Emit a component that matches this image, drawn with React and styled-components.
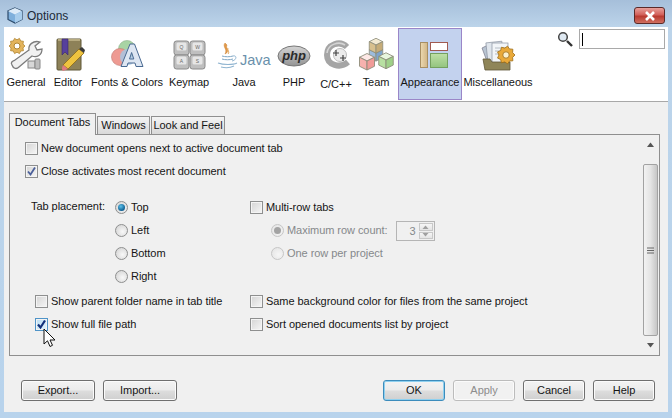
import React from "react";
import styled, { createGlobalStyle } from "styled-components";

const GlobalStyle = createGlobalStyle`
  html, body {
    margin: 0;
    padding: 0;
    overflow: hidden;
  }
  * {
    box-sizing: border-box;
  }
`;

const Window = styled.div`
  position: relative;
  width: 672px;
  height: 418px;
  display: flex;
  flex-direction: column;
  padding: 0 4px 6px;
  background: linear-gradient(to bottom, #a6bfda 0, #bcd4ea 27px, #b8d3ec 100%);
  font-family: "Liberation Sans", "Noto Sans", sans-serif;
  font-size: 11px;
  letter-spacing: -0.05px;
  color: #151515;
`;

const TitleBar = styled.div`
  height: 27px;
  flex: none;
  display: flex;
  align-items: center;
  padding: 4px 3px 0 3px;
  gap: 4px;
  font-size: 12px;
  letter-spacing: 0;
  color: #1c2a38;
`;

const CloseButton = styled.div`
  margin-left: auto;
  width: 31px;
  height: 17px;
  border: 1px solid #5a2a28;
  border-radius: 3px;
  background: linear-gradient(to bottom, #e8a09a 0%, #d2605a 45%, #b93a30 55%, #cf6f60 100%);
  display: flex;
  align-items: center;
  justify-content: center;
`;

const Body = styled.div`
  flex: 1;
  display: flex;
  flex-direction: column;
  background: #f0f0f0;
`;

const Toolbar = styled.div`
  height: 75px;
  flex: none;
  display: flex;
  align-items: flex-start;
  background: #fff;
  border-bottom: 1px solid #a8a8a8;
`;

const ToolItem = styled.div`
  width: ${(p) => p.$w}px;
  margin-top: 1px;
  margin-left: ${(p) => p.$ml || 0}px;
  height: 72px;
  flex: none;
  display: flex;
  flex-direction: column;
  align-items: center;
  padding-top: 7px;
  border: 1px solid ${(p) => (p.$active ? "#9a86c8" : "transparent")};
  background: ${(p) => (p.$active ? "#c3d2ee" : "transparent")};
`;

const ToolIcon = styled.div`
  height: 36px;
  display: flex;
  justify-content: center;
`;

const ToolLabel = styled.div`
  margin-top: ${(p) => (p.$low ? 4 : 2)}px;
  height: 16px;
  line-height: 16px;
  white-space: nowrap;
`;

const SearchBox = styled.div`
  margin-left: auto;
  margin-right: 3px;
  margin-top: 2px;
  display: flex;
  align-items: flex-start;
  gap: 6px;
`;

const SearchGlyph = styled.svg`
  margin-top: 2px;
`;

const SearchInput = styled.div`
  width: 86px;
  height: 20px;
  background: #fff;
  border: 1px solid #a9a9a9;
  padding: 3px 2px;
`;

const Caret = styled.div`
  width: 1px;
  height: 13px;
  background: #000;
`;

const TabArea = styled.div`
  flex: 1;
  display: flex;
  flex-direction: column;
  padding: 11px 8px 0 5px;
`;

const TabRow = styled.div`
  display: flex;
  align-items: flex-end;
  height: 22px;
  gap: 1px;
  position: relative;
  z-index: 1;
  margin-bottom: -1px;
`;

const Tab = styled.div`
  width: ${(p) => p.$w}px;
  height: ${(p) => (p.$active ? 22 : 19)}px;
  text-align: center;
  white-space: nowrap;
  line-height: ${(p) => (p.$active ? 17 : 16)}px;
  border: 1px solid #8f8f8f;
  border-bottom: ${(p) => (p.$active ? "none" : "1px solid #8f8f8f")};
  background: ${(p) =>
    p.$active ? "#f0f0f0" : "linear-gradient(to bottom, #f4f4f4, #d9d9d9)"};
`;

const Panel = styled.div`
  height: 222px;
  flex: none;
  display: flex;
  border: 1px solid #8f8f8f;
  background: #f0f0f0;
`;

const PanelMain = styled.div`
  flex: 1;
  padding: 1px 0 0 15px;
  display: flex;
  flex-direction: column;
`;

const Row = styled.div`
  height: 23px;
  display: flex;
  align-items: center;
  padding-left: ${(p) => p.$indent || 0}px;
  white-space: nowrap;
  color: ${(p) => (p.$disabled ? "#85888b" : "inherit")};
`;

const Section = styled.div`
  display: flex;
  margin-top: ${(p) => p.$top || 0}px;
`;

const LeftColumn = styled.div`
  width: 225px;
  flex: none;
  display: flex;
  padding-left: 6px;
`;

const PlacementLabel = styled.div`
  width: 84px;
  height: 23px;
  line-height: 23px;
  flex: none;
`;

const Column = styled.div`
  display: flex;
  flex-direction: column;
`;

const CheckBox = styled.span`
  width: 13px;
  height: 13px;
  flex: none;
  margin: 2px 3px 0 0;
  border: 1px solid ${(p) => (p.$hover ? "#4f94c8" : "#8e8f8f")};
  box-shadow: inset 0 0 0 1px #f4f4f4;
  background: ${(p) =>
    p.$hover
      ? "linear-gradient(135deg, #bcdff5, #e4f3fb)"
      : "linear-gradient(135deg, #d4d4d4, #f6f6f6)"};
  display: flex;
  align-items: center;
  justify-content: center;
`;

const Radio = styled.span`
  width: 13px;
  height: 13px;
  flex: none;
  margin: 2px 3px 0 0;
  border-radius: 50%;
  border: 1px solid ${(p) => (p.$disabled ? "#c6c6c6" : "#8e8f8f")};
  background: ${(p) =>
    p.$disabled
      ? "radial-gradient(circle at 60% 60%, #f6f6f6, #e2e2e2)"
      : "radial-gradient(circle at 60% 60%, #f8f8f8, #cfcfcf)"};
  display: flex;
  align-items: center;
  justify-content: center;
`;

const RadioDot = styled.span`
  width: 7px;
  height: 7px;
  border-radius: 50%;
  background: ${(p) =>
    p.$disabled
      ? "#a3a3a3"
      : "radial-gradient(circle at 40% 35%, #5cc0ea, #0f5f92 70%)"};
`;

const Spinner = styled.div`
  width: 39px;
  height: 20px;
  margin-left: 8px;
  margin-top: 3px;
  display: flex;
  border: 1px solid #b5b5b5;
  background: #f0f0f0;
`;

const SpinnerValue = styled.div`
  flex: 1;
  text-align: right;
  padding-right: 2px;
  line-height: 18px;
  color: #85888b;
`;

const SpinnerArrows = styled.div`
  width: 16px;
  display: flex;
  flex-direction: column;
  padding: 1px;
  gap: 1px;
`;

const SpinnerArrow = styled.div`
  flex: 1;
  border: 1px solid #c8c8c8;
  background: linear-gradient(to bottom, #f6f6f6, #e4e4e4);
  display: flex;
  align-items: center;
  justify-content: center;
`;

const Scrollbar = styled.div`
  width: 15px;
  margin-right: 1px;
  flex: none;
  display: flex;
  flex-direction: column;
  align-items: center;
`;

const ScrollEnd = styled.div`
  height: 19px;
  flex: none;
  display: flex;
  align-items: center;
  justify-content: center;
`;

const ScrollThumb = styled.div`
  flex: 1;
  width: 15px;
  margin-top: 10px;
  border: 1px solid #a2a2a2;
  border-radius: 2px;
  background: linear-gradient(to right, #f2f2f2, #e4e4e4 50%, #c6c6c6);
  display: flex;
  align-items: center;
  justify-content: center;
`;

const Footer = styled.div`
  flex: 1;
  display: flex;
  align-items: flex-start;
  gap: 8px;
  padding: 24px 13px 0 17px;
`;

const FooterSpacer = styled.div`
  flex: 1;
`;

const Button = styled.div`
  width: ${(p) => p.$w}px;
  height: 21px;
  line-height: 19px;
  text-align: center;
  border-radius: 3px;
  border: 1px solid ${(p) => (p.$primary ? "#3c8cbc" : p.$disabled ? "#bcbcbc" : "#6f6f6f")};
  color: ${(p) => (p.$disabled ? "#8d8d8d" : "#151515")};
  background: ${(p) =>
    p.$disabled
      ? "#f1f1f1"
      : "linear-gradient(to bottom, #f3f3f3 0%, #ececec 45%, #dcdcdc 55%, #cfcfcf 100%)"};
  box-shadow: ${(p) => (p.$primary ? "inset 0 0 0 1px #8fd0ef" : "inset 0 0 0 1px #fbfbfb")};
`;

const Cursor = styled.svg`
  position: absolute;
  left: 43px;
  top: 328px;
`;

const Check = ({ dark }) => (
  <svg width="11" height="11" viewBox="0 0 11 11">
    <path
      d="M2 5.5 L4.5 8.5 L9 1.5"
      fill="none"
      stroke={dark ? "#12307a" : "#4a5f9a"}
      strokeWidth={dark ? 2.2 : 1.8}
    />
  </svg>
);

const Cube = ({ x, y, s, top, left, right }) => (
  <g transform={`translate(${x} ${y}) scale(${s})`} stroke="#8d8d7a" strokeWidth="0.6">
    <path d="M0 -5 L5 -2.5 L0 0 L-5 -2.5 Z" fill={top} />
    <path d="M-5 -2.5 L0 0 L0 6 L-5 3.5 Z" fill={left} />
    <path d="M5 -2.5 L0 0 L0 6 L5 3.5 Z" fill={right} />
  </g>
);

const gearPath = (cx, cy, r, teeth) => {
  let d = "";
  for (let i = 0; i < teeth * 2; i++) {
    const a = (Math.PI * i) / teeth;
    const rad = i % 2 === 0 ? r : r * 0.78;
    d += `${i === 0 ? "M" : "L"}${(cx + rad * Math.cos(a)).toFixed(2)} ${(cy + rad * Math.sin(a)).toFixed(2)} `;
  }
  return d + "Z";
};

const GeneralIcon = () => (
  <svg width="36" height="36" viewBox="0 0 36 36">
    <path d={gearPath(9, 10, 8, 10)} fill="#e3b45c" stroke="#b08532" strokeWidth="0.8" />
    <circle cx="9" cy="10" r="3" fill="#fff" stroke="#b08532" />
    <path
      d="M4 29 C2 26 5 25 7 24 L21 14 C20 9 25 4 32 6 L27 10 L29 14 L34 13 C34 19 29 22 24 20 L11 31 C8 34 5 32 4 29 Z"
      fill="#f1f1f1"
      stroke="#7d7d7d"
      strokeWidth="1.3"
    />
    <rect x="20" y="25" width="7" height="7" fill="#d7d7d7" stroke="#888" />
    <rect x="27" y="23" width="5" height="10" rx="1" fill="#bdbdbd" stroke="#888" />
  </svg>
);

const EditorIcon = () => (
  <svg width="36" height="36" viewBox="0 0 36 36">
    <rect x="7" y="3" width="24" height="31" rx="1" fill="#8d8158" stroke="#5f5737" />
    <rect x="8" y="3" width="22" height="2" fill="#b7ab80" />
    <path d="M12 3 H18 V19 L15 16 L12 19 Z" fill="#57409c" stroke="#35256e" strokeWidth="0.6" />
    <path d="M13 29 L29 13 L34 17 L18 33 Z" fill="#eec33f" stroke="#8a6a18" strokeWidth="0.8" />
    <path d="M29 13 L32 11 L35 14 L34 17 Z" fill="#3a3a3a" />
    <path d="M13 29 L18 33 L13 35 Q11 33 13 29 Z" fill="#e07a80" />
  </svg>
);

const FontsIcon = () => (
  <svg width="36" height="36" viewBox="0 0 36 36">
    <circle cx="18" cy="13" r="8.5" fill="#a8d4a4" stroke="#8fb08c" strokeWidth="0.6" />
    <circle cx="11" cy="21" r="8.5" fill="#ee9a92" stroke="#bf7a74" strokeWidth="0.6" />
    <circle cx="19" cy="21" r="8" fill="#a8c6e2" opacity="0.85" />
    <path
      d="M12 30.5 H18 L19 27 H26 L27 30.5 H34 L25.5 8 H21 Z M20.5 23 L22.6 16.5 L24.8 23 Z"
      fill="#dde6f2"
      stroke="#4a6a92"
      strokeWidth="1"
      fillRule="evenodd"
    />
  </svg>
);

const KeyCap = ({ x, y, label }) => (
  <g>
    <rect x={x} y={y} width="15" height="14" rx="2.5" fill="#bfbfbf" stroke="#8a8a8a" />
    <rect x={x + 2.5} y={y + 1.5} width="10" height="8" rx="1.5" fill="#e6e6e6" />
    <text x={x + 7.5} y={y + 8} fontSize="5" textAnchor="middle" fill="#666" fontFamily="Liberation Sans, sans-serif">
      {label}
    </text>
  </g>
);

const KeymapIcon = () => (
  <svg width="36" height="36" viewBox="0 0 36 36">
    <KeyCap x={3} y={5} label="Q" />
    <KeyCap x={19} y={5} label="W" />
    <KeyCap x={3} y={19} label="A" />
    <KeyCap x={19} y={19} label="S" />
  </svg>
);

const JavaIcon = () => (
  <svg width="58" height="36" viewBox="0 0 58 36">
    <path d="M10 7 C7 11 13 13 10 18 C16 15 10 12 12 9 Z" fill="#e09a4a" stroke="#d08030" strokeWidth="0.5" />
    <path d="M13 12 C12 14 15 16 13 18" fill="none" stroke="#e0a050" />
    <path d="M7 20 C10 21 15 21 18 20 M7 23 C10 24 15 24 18 23" stroke="#7fa6c4" strokeWidth="1" fill="none" />
    <path d="M3 27 C8 29 18 29 22 27 M6 31 C10 32 15 32 19 30" stroke="#8fb4d0" strokeWidth="1.1" fill="none" />
    <path d="M18 20 C22 19 22 24 17 25" stroke="#8fb4d0" fill="none" />
    <text x="25" y="29" fontSize="14.5" fill="#6a90ab" fontFamily="Liberation Sans, sans-serif">
      Java
    </text>
  </svg>
);

const PhpIcon = () => (
  <svg width="36" height="36" viewBox="0 0 36 36">
    <defs>
      <linearGradient id="phpFill" x1="0" y1="0" x2="0" y2="1">
        <stop offset="0" stopColor="#d4d4d4" />
        <stop offset="1" stopColor="#949494" />
      </linearGradient>
    </defs>
    <ellipse cx="18" cy="20" rx="16" ry="10" fill="url(#phpFill)" stroke="#777" />
    <text x="18" y="24" fontSize="13" fontWeight="700" fontStyle="italic" textAnchor="middle" fill="#2a2a2a" fontFamily="Liberation Sans, sans-serif">
      php
    </text>
  </svg>
);

const CppIcon = () => (
  <svg width="36" height="36" viewBox="0 0 36 36">
    <path d="M29 11 C22 4 9 8 9 19 C9 29 22 33 30 26" fill="none" stroke="#a5a5a5" strokeWidth="6" />
    <path d="M27 9 C21 5 10 8 9 17" fill="none" stroke="#d4d4d4" strokeWidth="1.6" />
    <circle cx="22" cy="19" r="6.5" fill="#ececec" stroke="#bdbdbd" />
    <path d="M15 17 H21 M18 14 V20 M22 22 H28 M25 19 V25" stroke="#444" strokeWidth="1.2" />
  </svg>
);

const TeamIcon = () => (
  <svg width="36" height="36" viewBox="0 0 36 36">
    <Cube x={18} y={17} s={1.35} top="#d9e4f2" left="#9dbcdc" right="#7ea4cc" />
    <Cube x={18} y={9} s={1.35} top="#f3ead2" left="#d8c08e" right="#c6ac78" />
    <Cube x={9} y={25} s={1.5} top="#fde8e6" left="#f7b2ae" right="#f19c98" />
    <Cube x={28} y={24} s={1.45} top="#e8f6de" left="#b8e0a2" right="#9ed088" />
  </svg>
);

const AppearanceIcon = () => (
  <svg width="36" height="36" viewBox="0 0 36 36">
    <defs>
      <linearGradient id="barFill" x1="0" y1="0" x2="1" y2="0">
        <stop offset="0" stopColor="#ecd9b0" />
        <stop offset="1" stopColor="#d2b685" />
      </linearGradient>
      <linearGradient id="boxFill" x1="0" y1="0" x2="0" y2="1">
        <stop offset="0" stopColor="#bfe0a6" />
        <stop offset="1" stopColor="#93c47f" />
      </linearGradient>
    </defs>
    <rect x="8.5" y="6.5" width="7" height="25" fill="url(#barFill)" stroke="#a88f62" />
    <rect x="18.5" y="6.5" width="17" height="8" fill="#fff" stroke="#a05a50" />
    <rect x="18.5" y="17.5" width="17" height="14" fill="url(#boxFill)" stroke="#74a05f" />
  </svg>
);

const MiscIcon = () => (
  <svg width="36" height="36" viewBox="0 0 36 36">
    <path d="M2 12 L10 8 L17 28 L8 28 Z" fill="#b8c4d2" stroke="#778" strokeWidth="0.7" />
    <rect x="7" y="6" width="16" height="22" fill="#dfe5ec" stroke="#8a93a0" strokeWidth="0.7" transform="rotate(-6 15 17)" />
    <rect x="12" y="7" width="16" height="21" fill="#f2f5f8" stroke="#8a93a0" strokeWidth="0.7" />
    <path d="M15 12 H25 M15 15 H25 M15 18 H22" stroke="#a4adb8" strokeWidth="0.8" />
    <path d="M3 23 H10 L12 26 H30 V34 H5 Z" fill="#8f8558" stroke="#5f5737" strokeWidth="0.8" />
    <path d={gearPath(26, 19, 9, 9)} fill="#e9a93a" stroke="#9c6c18" strokeWidth="0.8" />
    <circle cx="26" cy="19" r="3.2" fill="#fbf1d0" stroke="#9c6c18" strokeWidth="0.8" />
  </svg>
);

const tools = [
  { label: "General", w: 44, icon: <GeneralIcon /> },
  { label: "Editor", w: 40, icon: <EditorIcon /> },
  { label: "Fonts & Colors", w: 78, icon: <FontsIcon /> },
  { label: "Keymap", w: 46, icon: <KeymapIcon /> },
  { label: "Java", w: 64, icon: <JavaIcon /> },
  { label: "PHP", w: 36, icon: <PhpIcon /> },
  { label: "C/C++", w: 48, icon: <CppIcon />, low: true },
  { label: "Team", w: 32, icon: <TeamIcon /> },
  { label: "Appearance", w: 64, ml: 6, icon: <AppearanceIcon />, active: true },
  { label: "Miscellaneous", w: 72, icon: <MiscIcon /> },
];

const CheckRow = ({ label, checked, hover, indent }) => (
  <Row $indent={indent}>
    <CheckBox $hover={hover}>{checked && <Check dark={hover} />}</CheckBox>
    {label}
  </Row>
);

const RadioRow = ({ label, selected, disabled, indent }) => (
  <Row $indent={indent} $disabled={disabled}>
    <Radio $disabled={disabled}>{selected && <RadioDot $disabled={disabled} />}</Radio>
    {label}
  </Row>
);

export default function App() {
  return (
    <Window>
      <GlobalStyle />
      <TitleBar>
        <svg width="16" height="17" viewBox="0 0 16 17">
          <path d="M8 1 L15 4 V12.5 L8 16 L1 12.5 V4 Z" fill="#7fb0dc" stroke="#2c4a6a" strokeWidth="1.2" />
          <path d="M8 1 L15 4 L8 7.5 L1 4 Z" fill="#dcebf8" />
          <path d="M8 7.5 V16 L15 12.5 V4 Z" fill="#a8cdec" />
        </svg>
        Options
        <CloseButton>
          <svg width="12" height="10" viewBox="0 0 12 10">
            <path d="M2 1 L10 9 M10 1 L2 9" stroke="#fff" strokeWidth="2.6" />
          </svg>
        </CloseButton>
      </TitleBar>
      <Body>
        <Toolbar>
          {tools.map((t) => (
            <ToolItem key={t.label} $w={t.w} $ml={t.ml} $active={t.active}>
              <ToolIcon>{t.icon}</ToolIcon>
              <ToolLabel $low={t.low}>{t.label}</ToolLabel>
            </ToolItem>
          ))}
          <SearchBox>
            <SearchGlyph width="16" height="16" viewBox="0 0 16 16">
              <path d="M10 10 L15 15" stroke="#333" strokeWidth="2.4" />
              <circle cx="6" cy="6" r="4.3" fill="#dfe9f2" stroke="#444" strokeWidth="1.5" />
            </SearchGlyph>
            <SearchInput>
              <Caret />
            </SearchInput>
          </SearchBox>
        </Toolbar>
        <TabArea>
          <TabRow>
            <Tab $active $w={87}>Document Tabs</Tab>
            <Tab $w={53}>Windows</Tab>
            <Tab $w={74}>Look and Feel</Tab>
          </TabRow>
          <Panel>
            <PanelMain>
              <CheckRow label="New document opens next to active document tab" />
              <CheckRow label="Close activates most recent document" checked />
              <Section $top={13}>
                <LeftColumn>
                  <PlacementLabel>Tab placement:</PlacementLabel>
                  <Column>
                    <RadioRow label="Top" selected />
                    <RadioRow label="Left" />
                    <RadioRow label="Bottom" />
                    <RadioRow label="Right" />
                  </Column>
                </LeftColumn>
                <Column>
                  <CheckRow label="Multi-row tabs" />
                  <Row $indent={21} $disabled>
                    <Radio $disabled>
                      <RadioDot $disabled />
                    </Radio>
                    Maximum row count:
                    <Spinner>
                      <SpinnerValue>3</SpinnerValue>
                      <SpinnerArrows>
                        <SpinnerArrow>
                          <svg width="7" height="4" viewBox="0 0 7 4">
                            <path d="M0.5 4 L3.5 0.5 L6.5 4 Z" fill="#a0a0a0" />
                          </svg>
                        </SpinnerArrow>
                        <SpinnerArrow>
                          <svg width="7" height="4" viewBox="0 0 7 4">
                            <path d="M0.5 0 L3.5 3.5 L6.5 0 Z" fill="#a0a0a0" />
                          </svg>
                        </SpinnerArrow>
                      </SpinnerArrows>
                    </Spinner>
                  </Row>
                  <RadioRow label="One row per project" disabled indent={21} />
                </Column>
              </Section>
              <Section $top={2}>
                <LeftColumn>
                  <Column>
                    <CheckRow indent={4} label="Show parent folder name in tab title" />
                    <CheckRow indent={4} label="Show full file path" checked hover />
                  </Column>
                </LeftColumn>
                <Column>
                  <CheckRow label="Same background color for files from the same project" />
                  <CheckRow label="Sort opened documents list by project" />
                </Column>
              </Section>
            </PanelMain>
            <Scrollbar>
              <ScrollEnd>
                <svg width="7" height="5" viewBox="0 0 7 5">
                  <path d="M0 5 L3.5 0.5 L7 5 Z" fill="#555" />
                </svg>
              </ScrollEnd>
              <ScrollThumb>
                <svg width="7" height="7" viewBox="0 0 7 7">
                  <path d="M0 1 H7 M0 3.5 H7 M0 6 H7" stroke="#666" />
                </svg>
              </ScrollThumb>
              <ScrollEnd>
                <svg width="7" height="5" viewBox="0 0 7 5">
                  <path d="M0 0 L3.5 4.5 L7 0 Z" fill="#555" />
                </svg>
              </ScrollEnd>
            </Scrollbar>
          </Panel>
        </TabArea>
        <Footer>
          <Button $w={74}>Export...</Button>
          <Button $w={74}>Import...</Button>
          <FooterSpacer />
          <Button $w={62} $primary>OK</Button>
          <Button $w={62} $disabled>Apply</Button>
          <Button $w={62}>Cancel</Button>
          <Button $w={62}>Help</Button>
        </Footer>
      </Body>
      <Cursor width="14" height="21" viewBox="0 0 14 21">
        <path
          d="M1 1 V16 L4.5 12.8 L7 18.5 L9.5 17.3 L7 12 H12 Z"
          fill="#fff"
          stroke="#111"
          strokeWidth="1"
        />
      </Cursor>
    </Window>
  );
}
